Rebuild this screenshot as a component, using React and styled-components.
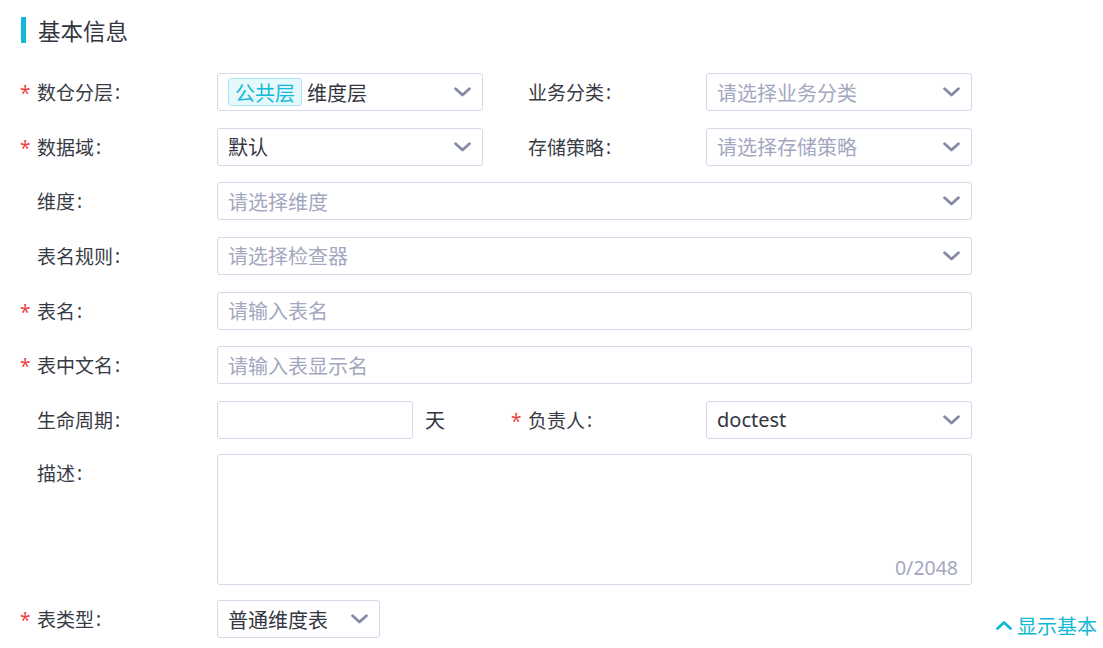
import React from "react";
import styled, { createGlobalStyle } from "styled-components";

const Global = createGlobalStyle`
  html, body { margin: 0; padding: 0; background: #ffffff; }
  body { font-family: "Noto Sans", "Noto Sans CJK SC", sans-serif; color: #333640; }
  * { box-sizing: border-box; }
`;

const Page = styled.div`
  width: 1103px;
  height: 648px;
  padding: 17px 6px 0 20px;
  overflow: hidden;
`;

const Title = styled.div`
  display: flex;
  align-items: center;
  height: 26px;
  gap: 12px;
  padding-left: 1px;
  font-size: 22.5px;
  color: #33363f;
`;

const Accent = styled.span`
  display: block;
  width: 5px;
  height: 26px;
  background: #12b9d6;
`;

const Form = styled.div`
  display: flex;
  flex-direction: column;
  gap: 16.67px;
  margin-top: 30px;
`;

const Row = styled.div`
  display: flex;
  align-items: flex-start;
  gap: ${(p) => p.$gap || 0}px;
  margin-top: ${(p) => p.$mt || 0}px;
`;

const Item = styled.div`
  display: flex;
  align-items: flex-start;
`;

const Label = styled.div`
  display: flex;
  align-items: center;
  width: ${(p) => p.$w || 197}px;
  height: 38px;
  font-size: 19px;
  color: #383b45;
  flex-shrink: 0;
`;

const Colon = styled.span`
  margin-left: 2px;
`;

const Star = styled.span`
  width: 17px;
  color: #f04141;
  font-size: 19px;
  line-height: 1;
  padding-top: 3px;
`;

const Box = styled.div`
  display: flex;
  align-items: center;
  width: ${(p) => p.$w}px;
  height: ${(p) => p.$h || 38}px;
  padding: 0 11px 0 10px;
  border: 1px solid #d6d8ea;
  border-radius: 3px;
  background: #fff;
  font-size: 20px;
  position: relative;
  flex-shrink: 0;
`;

const Value = styled.span`
  flex: 1;
  color: ${(p) => (p.$ph ? "#a3a7bf" : "#33363f")};
  white-space: nowrap;
`;

const Tag = styled.span`
  display: inline-flex;
  align-items: center;
  height: 28px;
  padding: 0 6px;
  margin-right: 5px;
  border: 1px solid #a6e6f2;
  border-radius: 3px;
  background: #e5f8fc;
  color: #12b9d6;
`;

const Unit = styled.span`
  display: flex;
  align-items: center;
  height: 38px;
  width: 70px;
  padding-left: 12px;
  font-size: 20px;
  color: #33363f;
`;

const Counter = styled.span`
  position: absolute;
  right: 13px;
  bottom: 3px;
  font-size: 19.5px;
  color: #a3a7bf;
`;

const Toggle = styled.div`
  display: flex;
  align-items: center;
  gap: 5px;
  margin-left: auto;
  margin-top: 11px;
  font-size: 20px;
  color: #12b9d6;
`;

const Chevron = () => (
  <svg width="17" height="10" viewBox="0 0 17 10" fill="none">
    <polyline points="1.6,1.8 8.5,8 15.4,1.8" stroke="#858aa6" strokeWidth="2.8" strokeLinecap="round" strokeLinejoin="round" />
  </svg>
);

const Up = () => (
  <svg width="16" height="9" viewBox="0 0 16 9" fill="none">
    <polyline points="1.5,7.5 8,1.5 14.5,7.5" stroke="#12b9d6" strokeWidth="2.8" strokeLinecap="round" strokeLinejoin="round" />
  </svg>
);

const FieldLabel = ({ req, children, w }) => (
  <Label $w={w}>
    <Star>{req ? "*" : ""}</Star>
    {children}
    <Colon>:</Colon>
  </Label>
);

const Select = ({ w, ph, children }) => (
  <Box $w={w}>
    <Value $ph={ph}>{children}</Value>
    <Chevron />
  </Box>
);

export default function App() {
  return (
    <Page>
      <Global />
      <Title>
        <Accent />
        基本信息
      </Title>
      <Form>
        <Row $gap={28}>
          <Item>
            <FieldLabel req>数仓分层</FieldLabel>
            <Select w={266}>
              <Tag>公共层</Tag>维度层
            </Select>
          </Item>
          <Item>
            <FieldLabel w={195}>业务分类</FieldLabel>
            <Select w={266} ph>请选择业务分类</Select>
          </Item>
        </Row>
        <Row $gap={28}>
          <Item>
            <FieldLabel req>数据域</FieldLabel>
            <Select w={266}>默认</Select>
          </Item>
          <Item>
            <FieldLabel w={195}>存储策略</FieldLabel>
            <Select w={266} ph>请选择存储策略</Select>
          </Item>
        </Row>
        <Row>
          <FieldLabel>维度</FieldLabel>
          <Select w={755} ph>请选择维度</Select>
        </Row>
        <Row>
          <FieldLabel>表名规则</FieldLabel>
          <Select w={755} ph>请选择检查器</Select>
        </Row>
        <Row>
          <FieldLabel req>表名</FieldLabel>
          <Box $w={755}>
            <Value $ph>请输入表名</Value>
          </Box>
        </Row>
        <Row>
          <FieldLabel req>表中文名</FieldLabel>
          <Box $w={755}>
            <Value $ph>请输入表显示名</Value>
          </Box>
        </Row>
        <Row $gap={28}>
          <Item>
            <FieldLabel>生命周期</FieldLabel>
            <Box $w={196} />
            <Unit>天</Unit>
          </Item>
          <Item>
            <FieldLabel w={195} req>负责人</FieldLabel>
            <Select w={266}>doctest</Select>
          </Item>
        </Row>
        <Row $mt={-2}>
          <FieldLabel>描述</FieldLabel>
          <Box $w={755} $h={131}>
            <Counter>0/2048</Counter>
          </Box>
        </Row>
        <Row $mt={-1}>
          <FieldLabel req>表类型</FieldLabel>
          <Select w={163}>普通维度表</Select>
          <Toggle>
            <Up />
            显示基本
          </Toggle>
        </Row>
      </Form>
    </Page>
  );
}
